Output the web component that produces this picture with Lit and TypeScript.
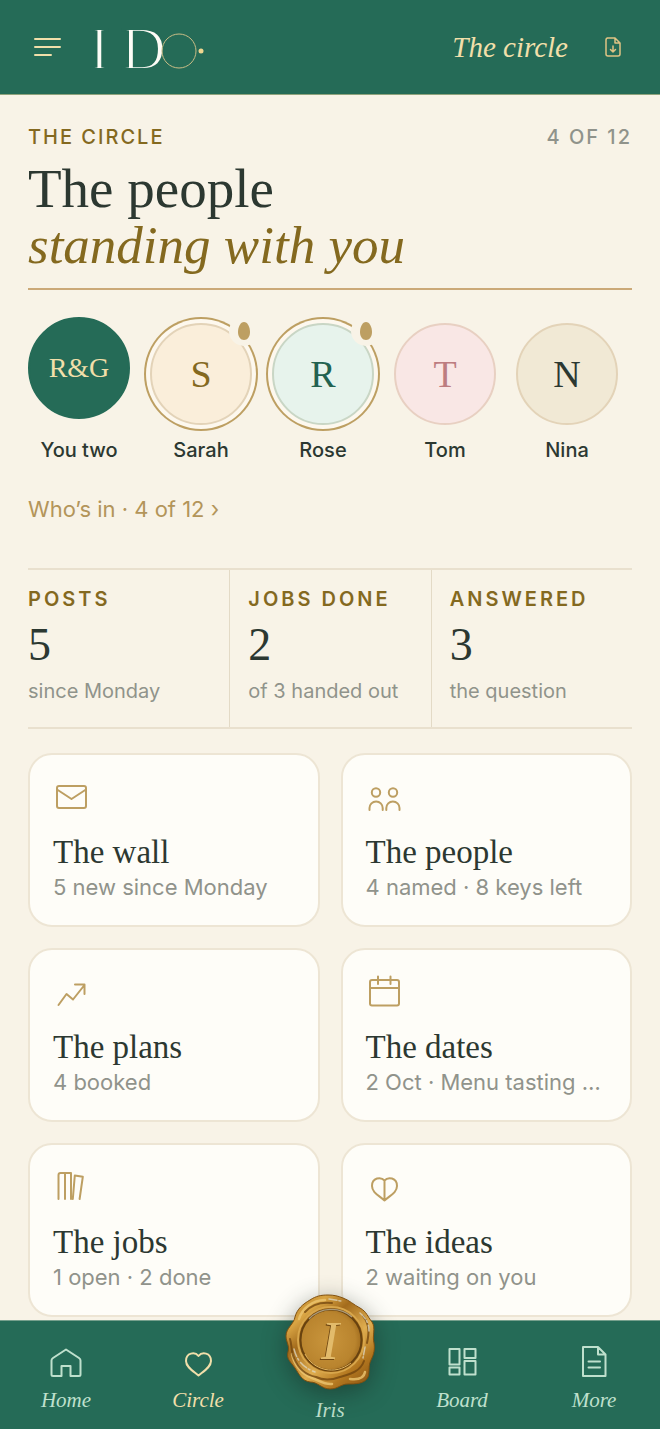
import { LitElement, html, svg, css } from "lit";
import { customElement, property } from "lit/decorators.js";
import { classMap } from "lit/directives/class-map.js";

const icons: Record<string, unknown> = {
  mail: svg`<rect x="4" y="7" width="29" height="22" rx="2"/><path d="M4 10.5 18.5 20 33 10.5"/>`,
  people: svg`<circle cx="10" cy="13.5" r="4.2"/><circle cx="27" cy="13.5" r="4.2"/><path d="M3.5 31v-2a6.6 6.6 0 0 1 13.2 0v2M20.3 31v-2a6.6 6.6 0 0 1 13.2 0v2"/>`,
  trend: svg`<path d="M5.5 31 13.5 20 20 25.5 31.5 11M22 10.5h9.5V20"/>`,
  calendar: svg`<rect x="4" y="6" width="29" height="25.5" rx="2"/><path d="M4 14h29M12 2.5V10M24.5 2.5V10"/>`,
  books: svg`<path d="M5.5 30V6q0-2 2-2H18v26M12 4v26M19.8 30l2-23.5 8 1.3L26.6 30"/>`,
  idea: svg`<path d="M18.5 11.500C15 7.500 6 8.500 6 17c0 6.500 7 9.500 12.500 14.500C24 26.500 31 23.500 31 17c0-8.500-9-9.500-12.500-5.500ZM18.500 11.500v20"/>`,
  home: svg`<path d="M18 5.500 5 14q-1.500 1-1.500 2.500v14Q3.500 32 5 32h8.500V22h9v10H31q1.500 0 1.500-1.500v-14q0-1.500-1.500-2.500Z"/>`,
  heart: svg`<path d="M18.500 12C15 7.500 6 8.500 6 17c0 6 7 10 12.500 14.500C24 27 31 23 31 17c0-8.500-9-9.500-12.500-5Z"/>`,
  board: svg`<path d="M5.500 5h10v15.500h-10ZM5.500 23.500h10v7h-10ZM20.500 5h11v9h-11ZM20.500 17h11v13.500h-11Z"/>`,
  page: svg`<path d="M7 3h15l7.500 7.500V32H7ZM22 3v7.500h7.500M12.500 17.500h11.500M12.500 23.500h11.500"/>`,
};

@customElement("line-icon")
export class LineIcon extends LitElement {
  @property() name = "mail";
  static styles = css`
    :host { display: block; width: 36px; height: 36px; }
    svg {
      display: block; width: 100%; height: 100%;
      fill: none; stroke: currentColor; stroke-width: 2;
      stroke-linecap: round; stroke-linejoin: round;
    }
  `;
  render() {
    return html`<svg viewBox="0 0 36 36" aria-hidden="true">${icons[this.name]}</svg>`;
  }
}

@customElement("wax-seal")
export class WaxSeal extends LitElement {
  static styles = css`
    :host { display: block; width: 96px; height: 100px; filter: drop-shadow(0 6px 12px rgba(20, 30, 25, 0.45)); }
    svg { display: block; width: 100%; height: 100%; }
    .initial { font: italic 54px "Liberation Serif", serif; text-anchor: middle; }
    .shade { fill: #6f4712; }
    .face { fill: #e2bb6b; }
  `;
  render() {
    return html`<svg viewBox="0 0 96 100" aria-hidden="true">
      <defs>
        <linearGradient id="rim" x1="0.1" y1="0" x2="0.9" y2="1">
          <stop offset="0" stop-color="#b57c22"/>
          <stop offset="0.18" stop-color="#d9a544"/>
          <stop offset="0.35" stop-color="#a36b1c"/>
          <stop offset="0.6" stop-color="#e0ae50"/>
          <stop offset="0.8" stop-color="#b3771f"/>
          <stop offset="1" stop-color="#8a5413"/>
        </linearGradient>
        <radialGradient id="disc" cx="0.45" cy="0.5" r="0.6">
          <stop offset="0" stop-color="#c9953c"/>
          <stop offset="0.75" stop-color="#b9842e"/>
          <stop offset="1" stop-color="#976318"/>
        </radialGradient>
      </defs>
      <path fill="url(#rim)" stroke="#80500f" stroke-width="1" d="M46 3C39 3 34 4 28 8 21 12 15 17 13 25 12 32 4 36 4 44 4 50 8 54 6 60 4 67 9 70 13 76 17 82 20 89 28 90 36 90 40 97 48 97 56 97 59 92 66 92 73 92 83 92 86 85 88 79 86 74 89 68 92 62 93 57 92 51 90 44 94 36 90 30 85 24 85 20 78 16 72 13 67 8 61 6 56 4 52 3 46 3Z"/>
      <path fill="none" stroke="#ecc570" stroke-width="2.500" stroke-linecap="round" opacity="0.8" d="M17 27C20 17 30 8 43 8M10 62C12 73 20 82 30 86 38 89 43 93 50 92M68 87C76 88 82 86 83 80"/>
      <path fill="none" stroke="#6f430d" stroke-width="2" stroke-linecap="round" opacity="0.75" d="M8 47C10 53 9 60 12 66 16 76 24 83 34 85 42 89 50 88 58 85 68 82 78 80 82 69M81 24C88 33 87 42 85 51M23 20C31 11 41 10 50 11"/>
      <path fill="none" stroke="#ded8c4" stroke-width="1.500" stroke-linecap="round" stroke-dasharray="8 2 2 3" opacity="0.75" d="M47 7 59 9M78 21C84 26 87 32 87 39M12 57C15 69 22 76 33 80M83 55 81 66"/>
      <circle cx="49" cy="48" r="33" fill="#9c6719" stroke="#d8a64b" stroke-width="2"/>
      <circle cx="49" cy="48" r="30.500" fill="url(#disc)" stroke="#68420f" stroke-width="2"/>
      <path fill="none" stroke="#c9c0a5" stroke-width="1.200" opacity="0.7" d="M27 27C38 15 58 14 70 25"/>
      <path fill="none" stroke="#e4b65f" stroke-width="1" d="M23 62C31 78 53 84 69 71"/>
      <text class="initial shade" x="47" y="68">I</text>
      <text class="initial face" x="48" y="67">I</text>
    </svg>`;
  }
}

const circle = [
  { initials: "R&G", name: "You two", tone: "pair" },
  { initials: "S", name: "Sarah", tone: "sand", keeper: true },
  { initials: "R", name: "Rose", tone: "mint", keeper: true },
  { initials: "T", name: "Tom", tone: "rose" },
  { initials: "N", name: "Nina", tone: "oat" },
];

const stats = [
  { label: "Posts", value: "5", note: "since Monday" },
  { label: "Jobs done", value: "2", note: "of 3 handed out" },
  { label: "Answered", value: "3", note: "the question" },
];

const rooms = [
  { icon: "mail", title: "The wall", note: "5 new since Monday" },
  { icon: "people", title: "The people", note: "4 named · 8 keys left" },
  { icon: "trend", title: "The plans", note: "4 booked" },
  { icon: "calendar", title: "The dates", note: "2 Oct · Menu tasting …" },
  { icon: "books", title: "The jobs", note: "1 open · 2 done" },
  { icon: "idea", title: "The ideas", note: "2 waiting on you" },
];

const tabs = [
  { icon: "home", label: "Home" },
  { icon: "heart", label: "Circle", current: true },
  { icon: "", label: "Iris" },
  { icon: "board", label: "Board" },
  { icon: "page", label: "More" },
];

@customElement("app-root")
export class AppRoot extends LitElement {
  static styles = css`
    :host {
      --green: #256b57;
      --paper: #f8f3e7;
      --ink: #2c3831;
      --gold: #bd9f62;
      --gold-deep: #84691f;
      --gold-pale: #f1dfaa;
      --muted: #90938b;
      --line: #e9e0ce;
      display: flex;
      flex-direction: column;
      min-height: 100vh;
      background: var(--paper);
      color: var(--ink);
      font-family: Inter, sans-serif;
      font-size: 20px;
      line-height: 24px;
    }
    * { box-sizing: border-box; }
    a { color: inherit; text-decoration: none; }
    h1, h2, p, dl, dd, dt, ul { margin: 0; padding: 0; font-weight: 400; }
    ul { list-style: none; }
    button { display: flex; padding: 0; border: 0; background: none; color: inherit; cursor: pointer; }

    .bar {
      display: flex; align-items: center;
      height: 95px; padding: 0 35px 0 34px;
      background: var(--green); color: var(--gold-pale);
      border-bottom: 1px solid #8fa37c;
    }
    .stroke { display: block; fill: none; stroke: currentColor; stroke-width: 2; stroke-linecap: round; stroke-linejoin: round; }
    .logo { display: block; margin-left: 26px; }
    .logo-letter { font: 62px "Liberation Serif", serif; fill: #fdfcf6; stroke: #256b57; stroke-width: 2; }
    .where { margin-left: auto; font: italic 29px/36px "Liberation Serif", serif; }
    .save { margin-left: 33px; color: #dfc384; }

    main { display: flex; flex-direction: column; flex: 1; padding: 30px 28px 3px; }
    .kicker { display: flex; justify-content: space-between; }
    .label { color: var(--gold-deep); font-weight: 500; letter-spacing: 2px; text-transform: uppercase; }
    .count { color: var(--muted); font-weight: 500; letter-spacing: 2px; }
    h1 {
      margin-top: 11px; padding-bottom: 14px;
      border-bottom: 2px solid #cba978;
      font: 55px/57px "Liberation Serif", serif;
    }
    .second { display: block; color: var(--gold-deep); font-size: 53px; font-style: italic; }

    .faces { display: flex; gap: 20px; margin-top: 27px; }
    .person { display: flex; flex-direction: column; align-items: center; gap: 13px; width: 102px; font-weight: 500; }
    .face {
      position: relative; display: flex; align-items: center; justify-content: center;
      width: 102px; height: 102px; margin-top: 6px;
      border: 2px solid #e3d3b8; border-radius: 50%;
      font: 38px/44px "Liberation Serif", serif;
    }
    .pair { margin: 0 0 6px; border-color: var(--green); background: var(--green); color: var(--gold-pale); font-size: 28px; }
    .sand { background: #faeeda; color: var(--gold-deep); }
    .mint { background: #e7f3ec; color: #236250; border-color: #c9d6c5; }
    .rose { background: #f9e7e5; color: #bd7d80; border-color: #e8d0c2; }
    .oat { background: #f1e9d5; color: var(--ink); }
    .keeper { box-shadow: 0 0 0 4px #fdf8ee, 0 0 0 6px var(--gold); }
    .drop {
      position: absolute; top: -9px; right: -9px;
      display: flex; align-items: center; justify-content: center;
      width: 30px; height: 30px; border-radius: 50%; background: var(--paper);
    }
    .whos { align-self: flex-start; margin-top: 33px; color: #b3955a; font-size: 22px; line-height: 28px; }

    .stats {
      display: grid; grid-template-columns: repeat(3, 1fr);
      margin-top: 45px; border: solid var(--line); border-width: 2px 0;
    }
    .stat { display: flex; flex-direction: column; gap: 9px; padding: 17px 0 24px 18px; border-left: 1px solid #e3dac6; }
    .stat:first-child { padding-left: 0; border-left: 0; }
    .stat .label { font-weight: 600; letter-spacing: 3px; }
    .value { font: 46px/50px "Liberation Serif", serif; }
    .note { color: var(--muted); }

    .rooms { display: grid; grid-template-columns: 1fr 1fr; gap: 21px; margin-top: 24px; }
    .room {
      display: flex; flex-direction: column; min-width: 0;
      padding: 24px 23px; border: 2px solid #ede5d4; border-radius: 24px; background: #fefdf8;
    }
    .room line-icon { color: var(--gold); }
    h2 { margin-top: 16px; font: 33px/42px "Liberation Serif", serif; }
    .room .note { overflow: hidden; font-size: 22px; line-height: 28px; white-space: nowrap; text-overflow: ellipsis; }

    nav {
      position: sticky; bottom: 0;
      display: grid; grid-template-columns: repeat(5, 1fr);
      height: 109px; border-top: 1px solid #76a08d;
      background: var(--green); color: #bfe0cd;
      font: italic 21px/28px "Liberation Serif", serif;
    }
    .tab { position: relative; display: flex; flex-direction: column; align-items: center; justify-content: flex-end; gap: 6px; padding-bottom: 15px; }
    .current { color: var(--gold-pale); }
    .centre { padding-bottom: 5px; }
    wax-seal { position: absolute; top: -29px; left: calc(50% - 48px); }
  `;

  render() {
    return html`
      <header class="bar">
        <button aria-label="Menu">
          <svg class="stroke" width="28" height="20" viewBox="0 0 28 20"><path d="M1 2h25M1 10h25M1 18h16"/></svg>
        </button>
        <svg class="logo" width="124" height="80" viewBox="0 0 124 80" role="img" aria-label="I Do">
          <text class="logo-letter" x="1" y="62">I</text>
          <text class="logo-letter" x="33" y="62">D</text>
          <circle cx="91" cy="44" r="17" fill="none" stroke="#c9bd86" stroke-width="1"/>
          <circle cx="113" cy="44" r="2.500" fill="#efd68f"/>
        </svg>
        <span class="where">The circle</span>
        <button class="save" aria-label="Save as file">
          <svg class="stroke" width="24" height="24" viewBox="0 0 24 24"><path stroke-width="1.500" d="M6 3h8l5 5v11q0 2-2 2H7q-2 0-2-2V5q0-2 2-2M14 3v5h5M12 11v6M9.500 14.500 12 17l2.500-2.500"/></svg>
        </button>
      </header>
      <main>
        <div class="kicker"><span class="label">The circle</span><span class="count">4 OF 12</span></div>
        <h1>The people <span class="second">standing with you</span></h1>
        <ul class="faces">
          ${circle.map((p) => html`<li class="person">
            <span class=${classMap({ face: true, [p.tone]: true, keeper: !!p.keeper })}>${p.initials}
              ${p.keeper
                ? html`<span class="drop"><svg width="12" height="20" viewBox="0 0 12 20"><path fill="#bd9f62" d="M6 1c3.500 0 6 5 6 10 0 4.500-2.500 8-6 8s-6-3.500-6-8C0 6 2.500 1 6 1Z"/></svg></span>`
                : ""}
            </span>
            <span>${p.name}</span>
          </li>`)}
        </ul>
        <a class="whos" href="#people">Who’s in · 4 of 12 ›</a>
        <dl class="stats">
          ${stats.map((s) => html`<div class="stat"><dt class="label">${s.label}</dt><dd class="value">${s.value}</dd><dd class="note">${s.note}</dd></div>`)}
        </dl>
        <div class="rooms">
          ${rooms.map((r) => html`<a class="room" href="#${r.icon}"><line-icon name=${r.icon}></line-icon><h2>${r.title}</h2><p class="note">${r.note}</p></a>`)}
        </div>
      </main>
      <nav aria-label="Main">
        ${tabs.map((t) => html`<a class=${classMap({ tab: true, current: !!t.current, centre: !t.icon })} href="#${t.label}">
          ${t.icon ? html`<line-icon name=${t.icon}></line-icon>` : html`<wax-seal></wax-seal>`}
          <span>${t.label}</span>
        </a>`)}
      </nav>
    `;
  }
}
